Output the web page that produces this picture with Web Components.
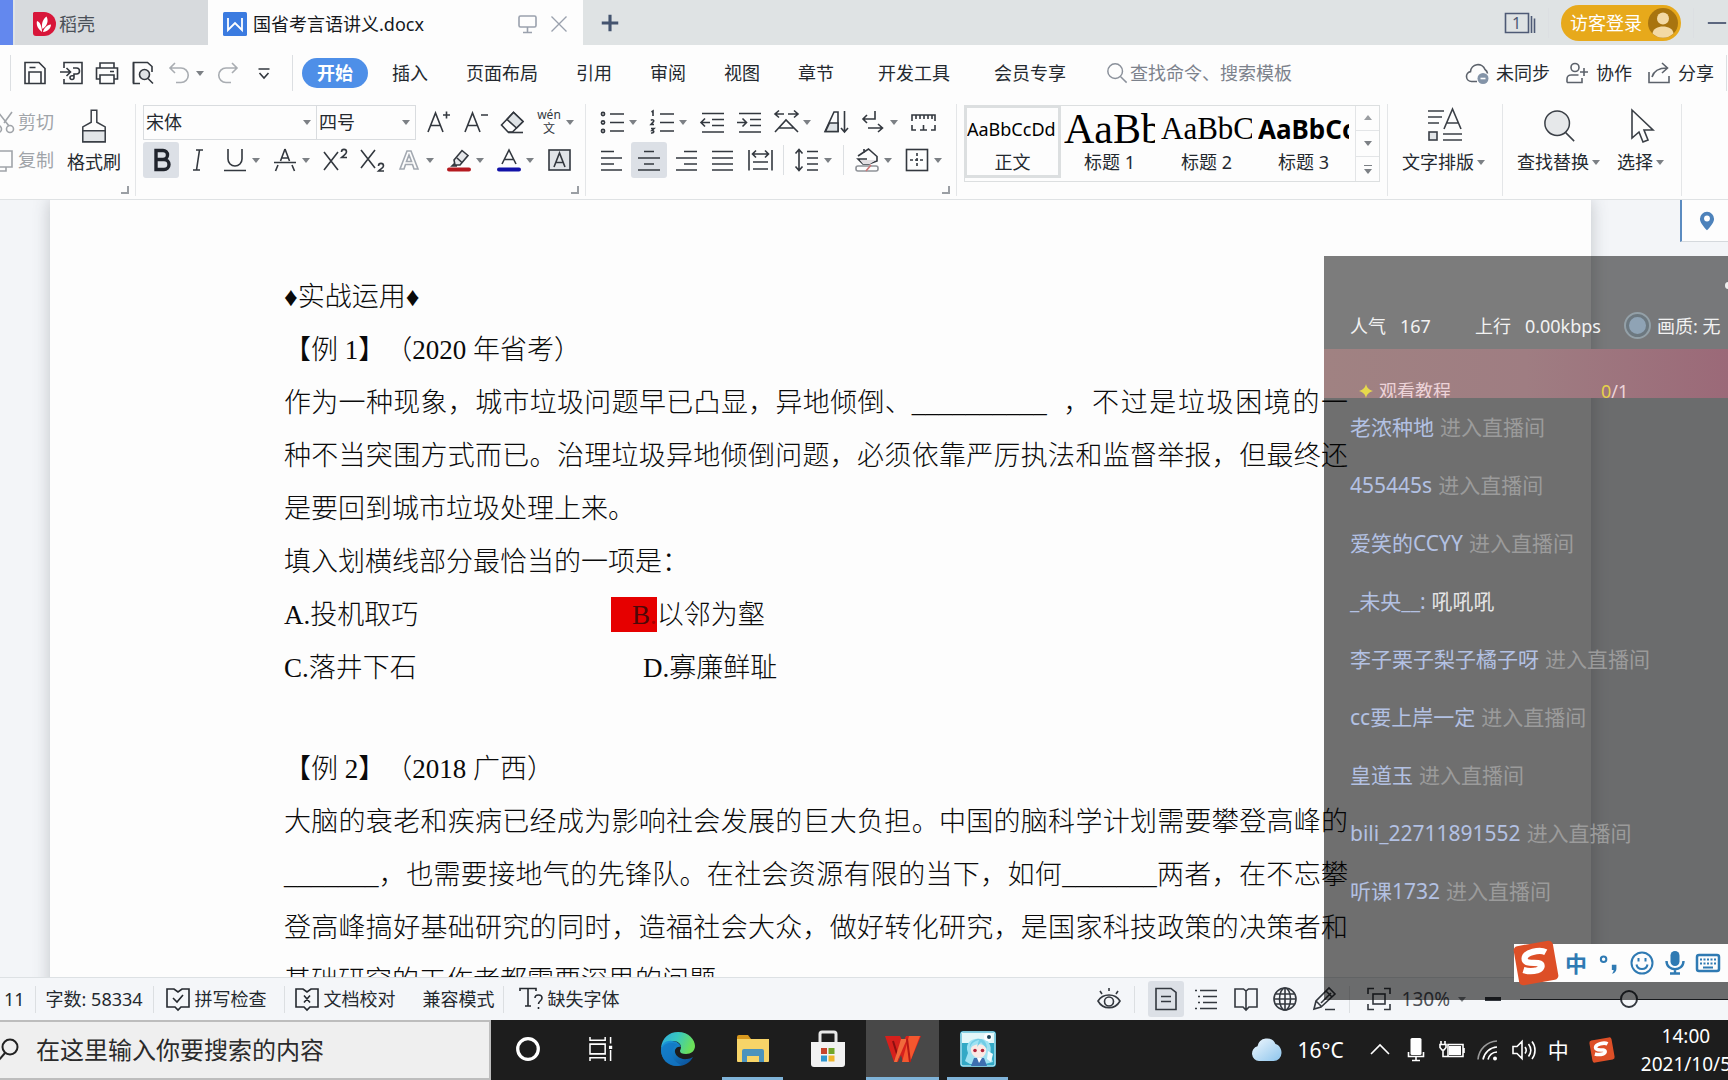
<!DOCTYPE html>
<html lang="zh-CN">
<head>
<meta charset="utf-8">
<title>国省考言语讲义.docx</title>
<style>
  html, body { margin: 0; height: 100%; overflow: hidden; }
  body {
    font: 18px/24px "Noto Sans", "Noto Sans CJK SC", sans-serif;
    font-weight: 400; color: #24292f; background: #fdfdfd;
  }
</style>
</head>
<body>
<desk-top></desk-top>
<script>
const ICONS = {
  /* quick access */
  save: '<path d="M2 1.500h14l6 6v15H2zM6 22V11h12v11M6.500 6.500h6"/>',
  exportpdf: '<path d="M5 7V1.500h18v21H5V18M1 11h10M7.500 7l4 4-4 4M14 7h3.500a3 3 0 0 1 0 6H15v3.500a2 2 0 1 1-4 0c0-1.500 1.500-2 4-2"/>',
  print: '<path d="M5 7V2h14v5M5 18H1.500V7h21v11H19M5 14h14v8.500H5zM15 10.500h4"/>',
  preview: '<path d="M9 22.500H2.500v-21h14l4.500 4V11"/><circle cx="13.500" cy="13.500" r="5" fill="#dfe3e6"/><path d="M17 17.500l5 5M2.500 1.500V22"/>',
  undo: '<path d="M8 2L3 7l5 5M3 7h11a7 7 0 0 1 0 14.500H9"/>',
  redo: '<path d="M16 2l5 5-5 5M21 7H10a7 7 0 0 0 0 14.500h5"/>',
  more: '<path d="M6.500 8h11M7.500 12l4.500 5 4.500-5"/>',
  /* title bar */
  rice: '<path d="M2 0h10a12 12 0 0 1 0 24H4a3 3 0 0 1-3-3V1z" fill="#d8163a" stroke="none"/><path d="M10 20C6 17 4 13 5 9c3 1 5 5 5 11zM10.500 17C9 12 11 7 14.500 4.500 17 9 15 14 10.500 17zM11 20c1-4 4-7 8-7.500 0 4-3.500 7-8 7.500z" fill="#fff" stroke="none"/>',
  wdoc: '<rect width="24" height="24" rx="1.500" fill="#3b7be0" stroke="none"/><path d="M5 6v12l7-7 7 7V6" stroke="#fff" stroke-width="1.800"/>',
  monitor: '<rect x="3" y="4" width="17" height="11" rx="1.500"/><path d="M11.500 15v5M7 20.500h9"/>',
  close: '<path d="M3 3l18 18M21 3L3 21"/>',
  plus: '<path d="M12 3v18M3 12h18" stroke="#44546f" stroke-width="3.400"/>',
  windows: '<path d="M1.500 2.500h23v19h-23zM27.500 5v17M30.500 7.500V22" stroke="#4e5a75"/>',
  user: '<circle cx="15" cy="15" r="15" fill="#a8740f" stroke="none"/><circle cx="15" cy="10.500" r="6" fill="#f3d9a4" stroke="none"/><path d="M4.500 25.500C5 16 25 16 25.500 25.500A15 15 0 0 1 4.500 25.500z" fill="#f3d9a4" stroke="none"/>',
  minus: '<path d="M2 12h20" stroke="#4e5a75" stroke-width="2"/>',
  search: '<circle cx="10" cy="10" r="8"/><path d="M16 16l6.500 6.500"/>',
  cloud: '<path d="M12 20.500H6.500a5 5 0 0 1-1-9.900A7.500 7.500 0 0 1 20 8.500a5.500 5.500 0 0 1 2.500 4"/><circle cx="18" cy="17.500" r="5.500" fill="#8494a8" stroke="none"/><path d="M15.500 17.500h5" stroke="#fff"/>',
  coop: '<circle cx="10" cy="6.500" r="4"/><path d="M5.500 14h8M2 21.500V18a4 4 0 0 1 4-4M17 17v4.500H2M15 11h8M19 7v8"/>',
  share: '<path d="M2 11v10.500h20V15M5 16C7 9 12 7 20 7M15 2l5.500 5-5.500 5"/>',
  /* clipboard */
  cut: '<path d="M12 2L4 13M-2 2l11 14" /><circle cx="10" cy="19" r="3.500"/><circle cx="-2" cy="19" r="3.500"/>',
  copy: '<path d="M-2 3H12v16H-2zM6 19v4h-8"/>',
  brush: '<path d="M12 1h6v13l9 5v16H3V19l9-5z"/><path d="M3 23h24v12H3z" fill="#e2e5e8"/>',
  /* characters */
  grow: '<path d="M2 22L9.500 3 17 22M4.500 15.500h10M20.500 1.500v7M17 5h7"/>',
  shrink: '<path d="M2 22L9.500 3 17 22M4.500 15.500h10M18 5h7"/>',
  eraser: '<path d="M1.500 15L13.500 2.500l9.500 9L12.500 22H8z"/><path d="M7 9.500l9.500 8.500L23 11.500l-9.500-9z" fill="#dfe3e6"/><path d="M8 22.500h15"/>',
  bold: '<path d="M7 2.500h7a4.300 4.300 0 0 1 0 9H7zM7 11.500h8a5 5 0 0 1 0 10H7z" stroke="#20242c" stroke-width="3.400"/>',
  italic: '<path d="M10 2h7M7 22h7M13.500 2l-3 20"/>',
  underline: '<path d="M5 1v10a7 7 0 0 0 14 0V1M1 22.500h22"/>',
  strike: '<path d="M12 1L7.500 13M12 1l4.500 12M1 14.500h22M5 17l-2.500 6M19 17l2.500 6M9 10h6"/>',
  sup: '<path d="M1 4l14 18M15 4L1 22M18.500 4c0-3.500 5-3.500 5 0 0 2-3 3.500-5 5.500h5.500"/>',
  sub: '<path d="M1 2l14 18M15 2L1 20M18.500 18c0-3.500 5-3.500 5 0 0 2-3 3-5 5h5.500"/>',
  effect: '<path d="M3 21L10 3h4l7 18h-4l-1.500-4.500h-7L7 21zM9.500 13.500h5L12 7z" stroke="#a3a9b1"/>',
  marker: '<path d="M7 12l8-9.500 6 5L13 17H8zM8 15l-3 3h5M10 10l5.500 5" fill="#e5e7ea"/><path d="M2 21.500h20" stroke="#b51a20" stroke-width="4" stroke-linecap="round"/>',
  fontcolor: '<path d="M5 16L12 2l7 14M7.500 11.500h9"/><path d="M2 21.500h20" stroke="#1212a8" stroke-width="4" stroke-linecap="round"/>',
  boxa: '<rect x="2" y="2" width="21" height="20" fill="#e1e4e8"/><path d="M7 19l5.500-14L18 19M9 14.500h7"/>',
  /* paragraphs */
  bullets: '<path d="M10 4h14M10 12.500h14M10 21h14"/><circle cx="3" cy="4" r="1.600"/><circle cx="3" cy="12.500" r="1.600"/><circle cx="3" cy="21" r="1.600"/>',
  numbers: '<path d="M10 4h14M10 12.500h14M10 21h14M1.500 2L3 1v5M1 10.500c1-1.500 3.500-.5 2.500 1L1 14.500h3M1 18.500h3l-2 2c2.500 0 2.500 3-1 2.500"/>',
  outdent: '<path d="M2 3.500h22M12 9.500h12M12 15.500h12M2 22h22M10 12.500H1M5 8.500l-4 4 4 4"/>',
  indent: '<path d="M2 3.500h22M13 9.500h11M13 15.500h11M2 22h22M0 12.500h9M5.500 8.500l4 4-4 4"/>',
  scale: '<path d="M1 22L12 10l12 12M5 18h15M1 4h9M5 0.500L1 4l4 3.500M14 4h10M20 .5l4 3.500-4 3.500"/>',
  sort: '<path d="M1 21.500L10 2h4v19.500z"/><path d="M5.500 13H14v8.500H1.500z" fill="#dfe3e6"/><path d="M20.500 1v21M17 18l3.500 4 3.500-4"/>',
  wrap: '<path d="M14 1v8H2M6 5L2 9l4 4M7 18h14M17 14l4.500 4-4.500 4"/>',
  ruler: '<path d="M1 11V5h23v6M5 5v4M9 5v4M13 5v4M17 5v4M21 5v4M1 15v5h4M24 15v5h-4M9 20h7M12.500 15v5"/>',
  left: '<path d="M1 3.500h13M1 10h21M1 16h13M1 22h21"/>',
  center: '<path d="M7 3.500h10M1 10h22M7 16h10M1 22h22"/>',
  right: '<path d="M10 3.500h13M2 10h21M10 16h13M2 22h21"/>',
  justify: '<path d="M1 3.500h21M1 10h21M1 16h21M1 22h21"/>',
  distribute: '<path d="M1 2v20.500M24 2v20.500M5 14h15M5 21h15M5 6h15M8 2.500L4.500 6 8 9.500M17 2.500L20.500 6 17 9.500"/>',
  spacing: '<path d="M12 3.500h11M12 10h11M12 16h11M12 22h11M4 2v21M.5 5.500L4 1.500l3.500 4M.5 18.500L4 22.500l3.500-4"/>',
  fill: '<path d="M3 8L13.500 1 22 8.500V13l-8 3H8L3 11h9M9 1v4"/><path d="M5 12h16l-6 4H8z" fill="#e3dfe2" stroke="none"/><rect x="1" y="18" width="22" height="5" rx="2" stroke="#8f9298"/><path d="M11 23l5-6" stroke="#c77"/>',
  border: '<rect x="1.500" y="1.500" width="21" height="21"/><path d="M12 5v15M5 12h15" stroke-dasharray="3 2"/>',
  layout: '<path d="M1 3h16M1 9h14M1 15h11M16 32h19M16 26h19M17 21L25.500 1 34 21M20 15h11"/><rect x="2" y="24" width="8" height="8" fill="#e2e5e8"/>',
  find: '<circle cx="15" cy="15" r="13" fill="#e6e8ea"/><path d="M24 25l9 9"/>',
  cursor: '<path d="M8 2v28l7-6 4 10 5-2-4-10h9z"/>',
  pin: '<path d="M12 1a8.500 8.500 0 0 0-8.500 8.500C3.500 15 12 23 12 23s8.500-8 8.500-13.500A8.500 8.500 0 0 0 12 1z" fill="#4d82bb" stroke="none"/><circle cx="12" cy="9" r="3.500" fill="#fff" stroke="none"/>',
  /* status bar */
  check: '<path d="M8 2H1v18h8l3 3 3-3h8V2h-7l-4 3zM7 11l4 4 6-7"/>',
  proof: '<path d="M8 2H1v18h8l3 3 3-3h8V2h-7l-4 3zM9 8.500l6 7M15 8.500l-6 7"/>',
  missing: '<path d="M1 4V1.500h16V4M9 1.500V19M6 19h6M16 11c0-4 7-4 7 0 0 3-3.500 3-3.500 6M19.500 20v2"/>',
  eye: '<path d="M1 14C6 6 18 6 23 14 18 23 6 23 1 14zM12 1v3M3 4l2 3M21 4l-2 3"/><circle cx="12" cy="14.500" r="4.500"/>',
  pageview: '<path d="M2 1.500h15l5 4v17H2zM7 9.500h10M7 14.500h10"/>',
  outline: '<path d="M5 3.500h17M8 9.500h14M8 15.500h14M5 21.500h17M0 3.500h2M3 9.500h2M3 15.500h2M0 21.500h2"/>',
  book: '<path d="M1 2h8.500L12 4l2.500-2H23v18h-8l-3 3-3-3H1zM12 4v18"/>',
  globe: '<circle cx="12" cy="12" r="11"/><ellipse cx="12" cy="12" rx="5.500" ry="11"/><path d="M12 1v22M2.500 7h19M1 12h22M2.500 17h19"/>',
  pen: '<path d="M2 22l2-8L17 1l6 6L9 20zM4 14l6 6M14 4l6 6M9 16L19 6M13 22.500h10"/>',
  fit: '<path d="M1 7V1.500h6M17 1.500h6V7M23 17v5.500h-6M7 22.500H1V17"/><rect x="6" y="7" width="12" height="10"/>',
  zoomout: '<path d="M4 12h16" stroke-width="4"/>',
  /* taskbar */
  magnify: '<circle cx="10" cy="9" r="7.500" stroke-width="2"/><path d="M5 15l-6 7" stroke-width="2"/>',
  cortana: '<circle cx="12" cy="12" r="9.500" stroke-width="3"/>',
  taskview: '<path d="M0 1v3h14V1M0 23v-3h14v3M0 7.500h14v9H0zM19 1v6M19 13v10" stroke-width="1.400"/><path d="M17.500 9h3v3h-3z" fill="#fff" stroke="none"/>',
  edge: '<defs><linearGradient id="e1" x1="0" y1="0" x2="1" y2="0.300"><stop offset="0" stop-color="#2fa8e0"/><stop offset=".5" stop-color="#38c8c0"/><stop offset="1" stop-color="#6be05a"/></linearGradient><linearGradient id="e2" x1="0" y1="0" x2="1" y2="1"><stop offset="0" stop-color="#1b9de0"/><stop offset="1" stop-color="#0a4a94"/></linearGradient></defs><path d="M1 17C2 7 9 1 18 1c11 0 17 8 17 14 0 5-4 8-9 8-4 0-6-1-6-3 0-1 1-2 1-4 0-3-3-6-8-6S4 12 1 17z" fill="url(#e1)" stroke="none"/><path d="M1 19C1 12 7 9 12 10c5 0 8 3 9 6-2-1-5 0-6 3-1 5 5 10 12 9 2 0 4-1 6-2-3 6-9 9-15 9C8 35 1 28 1 19z" fill="url(#e2)" stroke="none"/><path d="M1 19c3-8 12-9 16-5-3 1-5 4-5 8 0 6 5 11 10 12-11 4-21-4-21-15z" fill="#1276c4" opacity=".7" stroke="none"/>',
  folder: '<path d="M2 6a2 2 0 0 1 2-2h9l3 4H2z" fill="#d9991e" stroke="none"/><path d="M2 8h32v22a1 1 0 0 1-1 1H3a1 1 0 0 1-1-1z" fill="#f7d468" stroke="none"/><path d="M7 31V20a2 2 0 0 1 2-2h18a2 2 0 0 1 2 2v11h-5v-6H12v6z" fill="#4c93bd" stroke="none"/>',
  store: '<path d="M10 11V3a2 2 0 0 1 2-2h12a2 2 0 0 1 2 2v8" stroke="#e8e8e8" stroke-width="3"/><path d="M1 11h34v22a3 3 0 0 1-3 3H4a3 3 0 0 1-3-3z" fill="#f2f2f2" stroke="none"/><path d="M11 17h6v6h-6z" fill="#c6442c" stroke="none"/><path d="M18.500 17h6v6h-6z" fill="#72a62a" stroke="none"/><path d="M11 24.500h6v6h-6z" fill="#2f96d0" stroke="none"/><path d="M18.500 24.500h6v6h-6z" fill="#efb62c" stroke="none"/>',
  wps: '<path d="M0 5h15l3 6 3-6h15L25 31h-7l-2-7-3 7H9z" fill="#d6201c" stroke="none"/><path d="M8 10l5 16 5-14" stroke="#8c0f10" stroke-width="2"/><path d="M24 5h11L25 31h-8z" fill="#f4572e" stroke="none"/><path d="M16 8h6L12 31H9z" fill="#f06a3c" stroke="none"/><path d="M22 8l3 23" stroke="#b51a16" stroke-width="2"/>',
  live: '<rect width="36" height="36" rx="3" fill="#1c93b5" stroke="none"/><rect x="1" y="1" width="34" height="34" rx="2" fill="#33a9c6" stroke="#d8f4fb" stroke-width="1"/><path d="M2 2h32v10H2z" fill="#e4f7f9" stroke="none"/><path d="M8 22C4 12 12 7 19 8c8-1 14 5 11 15l3 8-8 2H10l-5-3z" fill="#9fe2f2" stroke="none"/><path d="M11 17c3-5 13-5 15 0 1 6-3 10-7 10s-9-4-8-10z" fill="#fbe9e4" stroke="none"/><path d="M10 17c1-6 8-8 9-8l-2 7 4-5 6 7c0-9-6-11-10-10S9 12 10 17z" fill="#72cde6" stroke="none"/><circle cx="15" cy="19.500" r="1.800" fill="#b3263b" stroke="none"/><circle cx="22.500" cy="19.500" r="1.800" fill="#b3263b" stroke="none"/><path d="M14 27h10l3 8H11z" fill="#3d6fb0" stroke="none"/><path d="M17 27l2 5 3-5z" fill="#fff" stroke="none"/><circle cx="28" cy="6" r="4" fill="#fff" stroke="none"/><circle cx="29" cy="6" r="2" fill="#1b4458" stroke="none"/><path d="M28 20l5 3-2 8-4-3z" fill="#eefafd" stroke="none"/>',
  weather: '<defs><linearGradient id="w" x1="0" y1="0" x2="1" y2="1"><stop offset="0" stop-color="#f1f8fe"/><stop offset="1" stop-color="#8cc4ec"/></linearGradient></defs><path d="M9 23a7.500 7.500 0 0 1-1.500-14.700A9.500 9.500 0 0 1 25.500 6c4 1 6 5 6 9a8 8 0 0 1-8 8z" fill="url(#w)" stroke="none"/>',
  up: '<path d="M3 16l9-9 9 9"/>',
  mic: '<rect x="6.500" y="0" width="11" height="17" rx="1.500" fill="#fff" stroke="none"/><path d="M4.500 14v4.500h15V14M12 18v4M8 22.500h8"/>',
  battery: '<path d="M8 6.500h15v12H8zM24 10v5M1 3v3M5 3v3M0 6.500h6v3L4 12H2L0 9.500zM3 12v6.500h5"/><path d="M9 8h12v9H9z" fill="#fff" stroke="none"/>',
  wifi: '<path d="M2 21.500A20 20 0 0 1 21 3" opacity=".55"/><path d="M7 21.500A15 15 0 0 1 21 9M12 21.500A10 10 0 0 1 21 14"/><circle cx="19" cy="20.500" r="2" fill="#fff" stroke="none"/>',
  volume: '<path d="M1 8.500h4l5-5v17l-5-5H1zM13 9c1.500 2 1.500 4.500 0 6.500M16.500 6c3 4 3 8.500 0 12.500M20 3.500c4 5 4 12.500 0 17.500"/>',
  sogou: '<g transform="rotate(-10 22 22)"><rect x="3" y="3" width="38" height="38" rx="4" fill="#dd4f27" stroke="none"/><path d="M33 13.500C28 9.500 13 10 12 16c-1 5 7 5 12 6.500 4 1.500 4 5.500-2 6.500-5 .5-9-.5-13-2.500" stroke="#fff" stroke-width="6"/></g>',
  comma: '<circle cx="5" cy="8" r="3" stroke-width="2.200"/><path d="M14 14h5v4c0 3-2 5.500-5 5.500 1-1 2-2.500 2-4h-2z" fill="#2f7ab3" stroke="none"/>',
  smile: '<circle cx="12" cy="12" r="10.500" stroke-width="2"/><path d="M6.500 13.500c1 6 10 6 11 0M8.500 7v3.500M15.500 7v3.500" stroke-width="2"/>',
  micblue: '<rect x="7.500" y="0" width="9" height="15" rx="4.500" fill="#2f7ab3" stroke="none"/><path d="M3.500 10c0 11 17 11 17 0M12 18v4M7 22.500h10" stroke-width="2.400"/>',
  keyboard: '<rect x="1" y="4" width="22" height="16" rx="2" stroke-width="2.500"/><path d="M4 8.500h16M4 12.500h16" stroke-width="2" stroke-dasharray="2 1.500"/><path d="M7 16.500h10" stroke-width="2"/>',
  star: '<path d="M12 0c2 7 5 10 12 12-7 2-10 5-12 12-2-7-5-10-12-12 7-2 10-5 12-12z" fill="#e6d94c" stroke="none"/>'
};

const define = (name, html, setup) => {
  const template = document.createElement('template');
  template.innerHTML = html;
  customElements.define(name, class extends HTMLElement {
    connectedCallback() {
      if (this.shadowRoot) return;
      this.attachShadow({ mode: 'open' }).append(template.content.cloneNode(true));
      if (setup) setup(this, this.shadowRoot);
    }
  });
};

/* Line icon: name, optional w/h (drawn size) and box (viewBox size). */
define('line-icon', `<style>
  :host { display: inline-flex; flex: none; color: inherit; }
  svg { display: block; overflow: visible; fill: none; stroke: currentColor; stroke-width: 1.6; }
</style><svg aria-hidden="true"></svg>`, (el, root) => {
  const svg = root.querySelector('svg');
  const w = el.getAttribute('w') || 24, h = el.getAttribute('h') || w;
  svg.setAttribute('width', w);
  svg.setAttribute('height', h);
  svg.setAttribute('viewBox', el.getAttribute('box') || '0 0 24 24');
  svg.innerHTML = ICONS[el.getAttribute('name')] || '';
});

define('drop-caret', `<style>
  :host { display: inline-block; flex: none; width: 0; height: 0;
    border: 4px solid transparent; border-top: 5px solid #7c8085; border-bottom: 0; }
  :host([up]) { border-top: 0; border-bottom: 5px solid #9a9da1; }
</style>`);

define('v-rule', `<style>
  :host { display: block; flex: none; width: 1px; height: 30px; background: #dcdfe2; }
</style>`);

/* Toolbar button with an optional caret and pressed state. */
define('tool-button', `<style>
  :host { display: block; flex: none; }
  button { all: unset; display: flex; align-items: center; gap: 5px; height: 36px; color: #33383f; }
  :host([faint]) button { color: #a9adb2; }
  :host([pressed]) button { background: #dce0e6; padding: 0 6px; margin: 0 -6px; border-radius: 3px; }
</style><button type="button"></button>`, (el, root) => {
  const b = root.querySelector('button');
  const n = el.getAttribute('icon');
  b.setAttribute('aria-label', n || '拼音');
  b.innerHTML = (n ? `<line-icon name="${n}"></line-icon>` : '') + '<slot></slot>' +
    (el.hasAttribute('caret') ? '<drop-caret></drop-caret>' : '');
});

define('title-bar', `<style>
  :host { display: flex; height: 45px; flex: none; background: #dfe3e4; align-items: stretch; overflow: hidden; }
  .home { width: 13px; background: #6388ee; margin-right: 2px; flex: none; }
  .tab { display: flex; align-items: center; box-sizing: border-box; flex: none; padding-top: 2px; }
  .rice { width: 193px; padding-left: 17px; gap: 3px; background: #d7dadd; color: #4a5058; }
  .doc { width: 375px; padding-left: 15px; padding-right: 14px; gap: 6px; background: #fdfdfd; color: #15181c; }
  .doc .name { flex: 1; }
  button { all: unset; display: flex; align-items: center; }
  .dim { color: #9aa1ad; margin-left: 3px; }
  .add { padding: 0 16px; }
  .right { margin-left: auto; display: flex; align-items: center; gap: 12px; flex: none; }
  .count { display: grid; place-items: center start; color: #4e5a75; }
  .count > * { grid-area: 1 / 1; }
  .count span { width: 25px; text-align: center; font-size: 16px; }
  .login { background: #e7a91b; color: #fff; height: 36px; border-radius: 18px; padding: 0 3px 0 9px; gap: 6px; }
</style>
<div class="home"></div>
<div class="tab rice"><line-icon name="rice"></line-icon><span>稻壳</span></div>
<div class="tab doc"><line-icon name="wdoc"></line-icon><span class="name">国省考言语讲义.docx</span>
  <button class="dim" aria-label="演示"><line-icon name="monitor"></line-icon></button>
  <button class="dim" aria-label="关闭"><line-icon name="close" w="20"></line-icon></button></div>
<button class="add" aria-label="新建"><line-icon name="plus" w="22"></line-icon></button>
<div class="right">
  <button class="count"><line-icon name="windows" w="32" h="24" box="0 0 32 24"></line-icon><span>1</span></button>
  <v-rule></v-rule>
  <button class="login"><span>访客登录</span><line-icon name="user" w="30" box="0 0 30 30"></line-icon></button>
  <v-rule></v-rule>
  <button aria-label="最小化"><line-icon name="minus" w="22"></line-icon></button>
</div>`);

define('menu-bar', `<style>
  :host { display: flex; align-items: center; height: 50px; padding: 2px 0 0 10px; flex: none; box-sizing: border-box; margin-top: 2px; }
  .quick { display: flex; align-items: center; gap: 12px; padding: 0 16px 0 12px; }
  v-rule { height: 36px; }
  nav { display: flex; align-items: center; gap: 38px; margin-left: 9px; }
  nav button, .right button { all: unset; white-space: nowrap; }
  nav .on { background: #4e8fe8; color: #fff; font-weight: 700; height: 30px; line-height: 30px; border-radius: 15px; padding: 0 15px; margin-right: -14px; }
  nav .wide { margin-left: 6px; }
  label { display: flex; align-items: center; gap: 2px; margin-left: 40px; color: #8a909a; flex: 1; min-width: 0; }
  input { all: unset; flex: 1; min-width: 0; font: inherit; }
  input::placeholder { color: #7c828c; opacity: 1; }
  .right { display: flex; align-items: center; gap: 15px; margin-right: 1px; }
  .right button { display: flex; align-items: center; gap: 7px; }
  .right line-icon { color: #5c626b; }
  .right v-rule { margin-left: -3px; }
</style>
<v-rule></v-rule>
<div class="quick">
  <tool-button icon="save"></tool-button><tool-button icon="exportpdf"></tool-button><tool-button icon="print"></tool-button>
  <tool-button icon="preview"></tool-button><tool-button icon="undo" faint caret></tool-button>
  <tool-button icon="redo" faint></tool-button><tool-button icon="more"></tool-button>
</div>
<v-rule></v-rule>
<nav>
  <button class="on">开始</button><button>插入</button><button>页面布局</button><button>引用</button>
  <button>审阅</button><button>视图</button><button>章节</button><button class="wide">开发工具</button><button class="wide">会员专享</button>
</nav>
<label><line-icon name="search" w="22"></line-icon><input type="text" aria-label="搜索" placeholder="查找命令、搜索模板"></label>
<div class="right">
  <button><line-icon name="cloud"></line-icon><span>未同步</span></button>
  <button><line-icon name="coop"></line-icon><span>协作</span></button>
  <button><line-icon name="share"></line-icon><span>分享</span></button>
  <v-rule></v-rule>
</div>`);

/* One ribbon group; the corner attribute adds the dialog launcher mark. */
define('ribbon-group', `<style>
  :host { display: flex; flex: none; box-sizing: border-box; position: relative; height: 92px; border-right: 1px solid #e4e6e8; }
  i { position: absolute; right: 6px; bottom: 2px; width: 6px; height: 6px; border: solid #9b9fa4; border-width: 0 2px 2px 0; display: none; }
  :host([corner]) i { display: block; }
</style><slot></slot><i></i>`);

define('style-card', `<style>
  :host { display: block; flex: none; width: 97px; box-sizing: border-box; height: 73px; }
  button { all: unset; box-sizing: border-box; display: flex; flex-direction: column; width: 100%; height: 73px; border: 3px solid transparent; }
  :host([on]) button { border-color: #dcdfe0; }
  .sample { height: 42px; line-height: 42px; overflow: hidden; white-space: nowrap; color: #000; }
  .label { line-height: 24px; text-align: center; }
</style><button type="button"><span class="sample"><slot name="sample"></slot></span><span class="label"><slot></slot></span></button>`);

define('rib-bon', `<style>
  :host { display: flex; align-items: flex-start; height: 103px; padding-top: 7px; flex: none; box-sizing: border-box; border-bottom: 1px solid #dfe2e4; overflow: hidden; }
  .rows { display: flex; flex-direction: column; gap: 2px; }
  .row { display: flex; align-items: center; gap: 13px; height: 36px; }
  .clip { display: flex; padding: 0 14px 0 0; gap: 13px; }
  .clip .rows button { all: unset; display: flex; align-items: center; gap: 4px; height: 36px; color: #a0a4a9; }
  .big { all: unset; display: flex; flex-direction: column; align-items: center; gap: 6px; height: 76px; padding-top: 4px; box-sizing: border-box; white-space: nowrap; }
  .big line-icon { height: 36px; align-items: center; color: #3a3f46; }
  .big .t { display: flex; align-items: center; gap: 3px; margin-right: 2px; }
  .combos { display: flex; width: 273px; height: 35px; box-sizing: border-box; border: 1px solid #d9dcdf; margin-right: -3px; }
  .combo { position: relative; display: flex; }
  .combo + .combo { border-left: 1px solid #d9dcdf; }
  .combo.f { flex: 1; } .combo.s { width: 98px; }
  select { all: unset; flex: 1; padding-left: 2px; font: inherit; line-height: 33px; }
  .combo drop-caret { position: absolute; right: 5px; top: 14px; }
  .wen { display: inline-flex; flex-direction: column; width: 24px; align-items: center; line-height: 14px; font-size: 12px; }
  .row v-rule { margin: 0 -2px; }
  .gallery { display: flex; height: 77px; box-sizing: border-box; outline: 1px solid #dcdfe0; outline-offset: -1px; margin: 1px 7px 0; }
  .arrows { display: flex; flex-direction: column; width: 24px; margin-left: 3px; border-left: 1px solid #e3e5e7; }
  .arrows button { all: unset; flex: 1; display: flex; flex-direction: column; gap: 3px; align-items: center; justify-content: center; }
  .arrows button + button { border-top: 1px solid #e3e5e7; }
  .arrows b { width: 8px; height: 1px; background: #7c8085; }
</style>
<ribbon-group corner><div class="clip"><div class="rows">
    <button><line-icon name="cut" w="14" h="24" box="0 0 14 24"></line-icon>剪切</button>
    <button><line-icon name="copy" w="14" h="24" box="0 0 14 24"></line-icon>复制</button></div>
  <button class="big"><line-icon name="brush" w="28" h="36" box="0 0 30 36"></line-icon><span>格式刷</span></button></div></ribbon-group>
<ribbon-group corner><div class="rows" style="padding: 0 11px 0 7px">
  <div class="row"><div class="combos">
      <div class="combo f"><select aria-label="字体"><option>宋体</option></select><drop-caret></drop-caret></div>
      <div class="combo s"><select aria-label="字号"><option>四号</option></select><drop-caret></drop-caret></div></div>
    <tool-button icon="grow"></tool-button><tool-button icon="shrink"></tool-button><tool-button icon="eraser"></tool-button>
    <tool-button caret><span class="wen"><span>wén</span><span>文</span></span></tool-button></div>
  <div class="row" style="padding-left: 6px"><tool-button icon="bold" pressed></tool-button><tool-button icon="italic"></tool-button>
    <tool-button icon="underline" caret></tool-button><tool-button icon="strike" caret></tool-button>
    <tool-button icon="sup"></tool-button><tool-button icon="sub"></tool-button><tool-button icon="effect" caret></tool-button>
    <tool-button icon="marker" caret></tool-button><tool-button icon="fontcolor" caret></tool-button><tool-button icon="boxa"></tool-button></div>
</div></ribbon-group>
<ribbon-group corner><div class="rows" style="padding: 0 14px 0 14px">
  <div class="row"><tool-button icon="bullets" caret></tool-button><tool-button icon="numbers" caret></tool-button>
    <tool-button icon="outdent"></tool-button><tool-button icon="indent"></tool-button><tool-button icon="scale" caret></tool-button>
    <tool-button icon="sort"></tool-button><tool-button icon="wrap" caret></tool-button><tool-button icon="ruler"></tool-button></div>
  <div class="row"><tool-button icon="left"></tool-button><tool-button icon="center" pressed></tool-button><tool-button icon="right"></tool-button>
    <tool-button icon="justify"></tool-button><tool-button icon="distribute"></tool-button><v-rule></v-rule>
    <tool-button icon="spacing" caret></tool-button><v-rule></v-rule><tool-button icon="fill" caret></tool-button><tool-button icon="border" caret></tool-button></div>
</div></ribbon-group>
<ribbon-group><div class="gallery">
  <style-card on><span slot="sample">AaBbCcDd</span>正文</style-card>
  <style-card><span slot="sample" style="font-family: 'Liberation Serif', serif; font-size: 42px">AaBb</span>标题 1</style-card>
  <style-card><span slot="sample" style="font-family: 'Liberation Serif', serif; font-size: 31px">AaBbC</span>标题 2</style-card>
  <style-card><span slot="sample" style="font-size: 26px; font-weight: 700">AaBbCc</span>标题 3</style-card>
  <div class="arrows"><button aria-label="上"><drop-caret up></drop-caret></button><button aria-label="下"><drop-caret></drop-caret></button><button aria-label="更多"><b></b><drop-caret></drop-caret></button></div>
</div></ribbon-group>
<ribbon-group><button class="big" style="padding-left: 14px; padding-right: 15px"><line-icon name="layout" w="36" box="0 0 36 36"></line-icon><span class="t">文字排版<drop-caret></drop-caret></span></button></ribbon-group>
<ribbon-group><button class="big" style="padding-left: 14px; padding-right: 15px"><line-icon name="find" w="34" box="0 0 36 36"></line-icon><span class="t">查找替换<drop-caret></drop-caret></span></button>
  <button class="big" style="padding-right: 15px"><line-icon name="cursor" w="36" box="0 0 36 36"></line-icon><span class="t">选择<drop-caret></drop-caret></span></button></ribbon-group>`);

/* A line of body text; full lines are justified to the text column. */
define('doc-line', `<style>
  :host { display: block; min-height: 53px; line-height: 53px; }
  :host([full]) { text-align-last: justify; }
  :host([gap]) { min-height: 48px; }
  :host([parts]) { display: flex; }
</style><slot></slot>`);

define('doc-area', `<style>
  :host { display: flex; flex: 1; min-height: 0; overflow: hidden; background: #f3f5f8; align-items: flex-start; }
  article { flex: 1; box-sizing: border-box; margin: 0 0 0 50px; padding: 71px 243px 0 234px; height: 900px; background: #fdfdfd;
    box-shadow: 0 0 16px rgba(60,70,80,.28); color: #0a0a0a;
    font: 27px/53px "Liberation Serif", "Noto Sans CJK SC", serif; font-weight: 300; text-spacing-trim: space-all; }
  .seg { text-align-last: justify; flex: 1; white-space: pre-wrap; }
  .seg.a { flex: 0 0 59%; }
  .opt { display: inline-block; width: 327px; }
  .opt.c { width: 359px; }
  mark { background: #e60000; color: #4d0808; padding: 3px 0 2px 21px; line-height: 31px; }
  mark span { color: #a80000; }
  aside { flex: none; width: 48px; height: 42px; margin-left: 89px; box-sizing: border-box; border-left: 2px solid #5b8bc0; border-bottom: 1px solid #d5d9dd; background: #fdfdfd; display: flex; align-items: center; padding-left: 15px; }
</style>
<article>
  <doc-line>♦实战运用♦</doc-line>
  <doc-line>【例 1】（2020 年省考）</doc-line>
  <doc-line parts><span class="seg a">作为一种现象，城市垃圾问题早已凸显，异地倾倒、</span><span class="seg">__________  ，不过是垃圾困境的一</span></doc-line>
  <doc-line full>种不当突围方式而已。治理垃圾异地倾倒问题，必须依靠严厉执法和监督举报，但最终还</doc-line>
  <doc-line>是要回到城市垃圾处理上来。</doc-line>
  <doc-line>填入划横线部分最恰当的一项是：</doc-line>
  <doc-line><span class="opt">A.投机取巧</span><mark>B<span>.</span></mark>以邻为壑</doc-line>
  <doc-line><span class="opt c">C.落井下石</span>D.寡廉鲜耻</doc-line>
  <doc-line gap></doc-line>
  <doc-line>【例 2】（2018 广西）</doc-line>
  <doc-line full>大脑的衰老和疾病已经成为影响社会发展的巨大负担。中国的脑科学计划需要攀登高峰的</doc-line>
  <doc-line full>_______，也需要接地气的先锋队。在社会资源有限的当下，如何_______两者，在不忘攀</doc-line>
  <doc-line full>登高峰搞好基础研究的同时，造福社会大众，做好转化研究，是国家科技政策的决策者和</doc-line>
  <doc-line>基础研究的工作者都需要深思的问题</doc-line>
</article>
<aside><line-icon name="pin" w="20"></line-icon></aside>`);

define('status-bar', `<style>
  :host { display: flex; align-items: center; height: 43px; flex: none; box-sizing: border-box; border-top: 1px solid #dde1e4; background: #f4f6f9; padding-left: 4px; overflow: hidden; }
  v-rule { height: 27px; }
  .l, .r { display: flex; align-items: center; gap: 10px; }
  .r { margin-left: auto; gap: 13px; color: #2c313a; }
  button { all: unset; display: flex; align-items: center; gap: 5px; white-space: nowrap; }
  .r tool-button + tool-button { margin-left: 2px; }
  .zoom { font-size: 19px; gap: 8px; color: #4d5158; margin-left: -2px; }
  input { -webkit-appearance: none; appearance: none; width: 218px; height: 20px; margin: 0 -10px 0 2px; background: none; }
  input::-webkit-slider-runnable-track { height: 1px; background: #33383f; }
  input::-webkit-slider-thumb { -webkit-appearance: none; width: 18px; height: 18px; margin-top: -9px; border: 2px solid #33383f; border-radius: 50%; background: #f4f6f9; box-sizing: border-box; }
</style>
<div class="l"><span>11</span><v-rule></v-rule><span>字数: 58334</span><v-rule></v-rule>
  <button style="margin-left: 2px"><line-icon name="check"></line-icon>拼写检查</button><v-rule style="margin-left: 7px"></v-rule>
  <button><line-icon name="proof"></line-icon>文档校对</button>
  <button style="margin-left: 17px">兼容模式</button><v-rule style="margin-left: -2px"></v-rule>
  <button style="margin-left: 5px"><line-icon name="missing"></line-icon>缺失字体</button></div>
<div class="r"><tool-button icon="eye"></tool-button><v-rule style="margin-right: 6px"></v-rule>
  <tool-button icon="pageview" pressed></tool-button><tool-button icon="outline" style="margin-left: 4px"></tool-button><tool-button icon="book"></tool-button>
  <tool-button icon="globe"></tool-button><tool-button icon="pen"></tool-button><v-rule></v-rule>
  <tool-button icon="fit" style="margin-left: 4px"></tool-button><button class="zoom">130%<drop-caret></drop-caret></button>
  <tool-button icon="zoomout" style="margin-left: 2px"></tool-button><input type="range" aria-label="缩放" min="0" max="100" value="50"></div>`);

define('task-button', `<style>
  :host { display: block; flex: none; width: 75px; }
  button { all: unset; box-sizing: border-box; width: 100%; height: 60px; display: flex; align-items: center; justify-content: center; color: #fff; border-bottom: 3px solid transparent; border-top: 1px solid transparent; }
  :host([run]) button { border-bottom-color: #7fb3d8; width: 61px; margin: 0 7px; }
  :host([on]) button { background: #484848; border-bottom-color: #7fb3d8; width: 73px; margin: 0 1px; }
</style><button type="button"><slot></slot></button>`);

define('task-bar', `<style>
  :host { display: flex; align-items: center; height: 60px; flex: none; background: #1d1d1d; color: #fff; overflow: hidden; }
  label { display: flex; align-items: center; width: 491px; margin-right: -1px; height: 60px; box-sizing: border-box; border: solid #bdbdbd; border-width: 2px 2px 2px 0; background: #efefef; color: #222; flex: none; }
  label line-icon { margin-right: 16px; }
  input { all: unset; flex: 1; font: 24px/32px "Noto Sans", "Noto Sans CJK SC", sans-serif; }
  input::placeholder { color: #2b2b2b; opacity: 1; }
  .tray { margin-left: auto; display: flex; align-items: center; gap: 12px; white-space: nowrap; }
  .w { display: flex; align-items: center; gap: 14px; font-size: 21px; margin-right: 12px; }
  .ime { font-size: 21px; }
  .clock { font-size: 19px; line-height: 28px; text-align: center; margin: 0 -3px 0 14px; }
</style>
<label><line-icon name="magnify" w="20" h="24" box="0 0 20 24"></line-icon><input type="text" aria-label="搜索" placeholder="在这里输入你要搜索的内容"></label>
<task-button><line-icon name="cortana" w="26"></line-icon></task-button>
<task-button><line-icon name="taskview" w="26"></line-icon></task-button>
<task-button><line-icon name="edge" w="36" box="0 0 36 36"></line-icon></task-button>
<task-button run><line-icon name="folder" w="36" box="0 0 36 36"></line-icon></task-button>
<task-button><line-icon name="store" w="36" box="0 0 36 36"></line-icon></task-button>
<task-button on><line-icon name="wps" w="36" box="0 0 36 36"></line-icon></task-button>
<task-button run><line-icon name="live" w="36" box="0 0 36 36"></line-icon></task-button>
<div class="tray">
  <span class="w"><line-icon name="weather" w="33" h="25" box="0 0 33 25"></line-icon>16°C</span>
  <line-icon name="up"></line-icon><line-icon name="mic"></line-icon><line-icon name="battery"></line-icon>
  <line-icon name="wifi"></line-icon><line-icon name="volume"></line-icon><span class="ime">中</span>
  <line-icon name="sogou" w="26" box="0 0 44 44" style="margin-left: 8px"></line-icon>
  <div class="clock"><div>14:00</div><div>2021/10/5</div></div>
</div>`);

define('chat-row', `<style>
  :host { display: flex; align-items: center; gap: 6px; height: 58px; font-size: 21px; color: #b3c1e3; white-space: nowrap; }
  .act { color: #9b9b9b; }
  .say { color: #e4e4e4; }
</style><span><slot></slot></span><span></span>`, (el, root) => {
  const s = root.querySelectorAll('span')[1];
  const say = el.getAttribute('say');
  s.className = say ? 'say' : 'act';
  s.textContent = say || '进入直播间';
});

define('live-panel', `<style>
  :host { display: flex; flex-direction: column; overflow: hidden; }
  header { height: 93px; box-sizing: border-box; background: rgba(0,0,0,.51); color: #f2f2f2; display: flex; align-items: flex-end; padding: 0 0 11px 26px; white-space: nowrap; position: relative; }
  header span { margin-right: 14px; }
  header .v { margin-right: 44px; }
  header .k { margin-right: 25px; }
  .dot { flex: none; width: 17px; height: 17px; border-radius: 50%; background: #8fa3b5; border: 3px solid #6c7880; outline: 2px solid #93a0a8; margin: 0 8px 1px 0; }
  .more { position: absolute; right: -4px; top: 26px; width: 7px; height: 7px; border-radius: 50%; background: #eee; }
  .task { height: 49px; box-sizing: border-box; overflow: hidden; padding: 30px 0 0 35px; display: flex; align-items: flex-start; gap: 6px; color: #ecd3d8; white-space: nowrap;
    background: linear-gradient(90deg, #a08282, #9f7d82 50%, #9b6978); }
  .task span { width: 216px; }
  .task line-icon { height: 24px; align-items: center; }
  .task b { font-weight: 400; color: #e6d14a; }
  .chat { flex: 1; background: rgba(0,0,0,.56); padding-left: 26px; }
</style>
<header><span>人气</span><span class="v">167</span><span>上行</span><span class="k">0.00kbps</span><div class="dot"></div>画质: 无<div class="more"></div></header>
<div class="task"><line-icon name="star" w="14"></line-icon><span>观看教程</span><div><b>0</b>/1</div></div>
<div class="chat">
  <chat-row>老浓种地</chat-row><chat-row>455445s</chat-row><chat-row>爱笑的CCYY</chat-row><chat-row say="吼吼吼">_未央__:</chat-row>
  <chat-row>李子栗子梨子橘子呀</chat-row><chat-row>cc要上岸一定</chat-row><chat-row>皇道玉</chat-row><chat-row>bili_22711891552</chat-row><chat-row>听课1732</chat-row>
</div>`);

define('ime-bar', `<style>
  :host { display: flex; align-items: center; height: 38px; background: #fdfdfd; color: #2f7ab3; box-sizing: border-box; }
  .logo { margin: 0 6px 0 -1px; }
  b { font-size: 22px; margin-right: 12px; }
  .set { display: flex; gap: 9px; align-items: center; }
</style><line-icon class="logo" name="sogou" w="46" box="0 0 44 44"></line-icon><b>中</b>
<div class="set"><line-icon name="comma" w="22"></line-icon><line-icon name="smile"></line-icon><line-icon name="micblue"></line-icon><line-icon name="keyboard"></line-icon></div>`);

define('desk-top', `<style>
  :host { display: flex; flex-direction: column; height: 100vh; position: relative; overflow: hidden; }
  live-panel { position: absolute; right: 0; top: 256px; width: 404px; height: 744px; }
  ime-bar { position: absolute; right: 0; top: 944px; width: 214px; }
</style>
<title-bar></title-bar><menu-bar></menu-bar><rib-bon></rib-bon><doc-area></doc-area><status-bar></status-bar><task-bar></task-bar>
<live-panel></live-panel><ime-bar></ime-bar>`);
</script>
</body>
</html>
